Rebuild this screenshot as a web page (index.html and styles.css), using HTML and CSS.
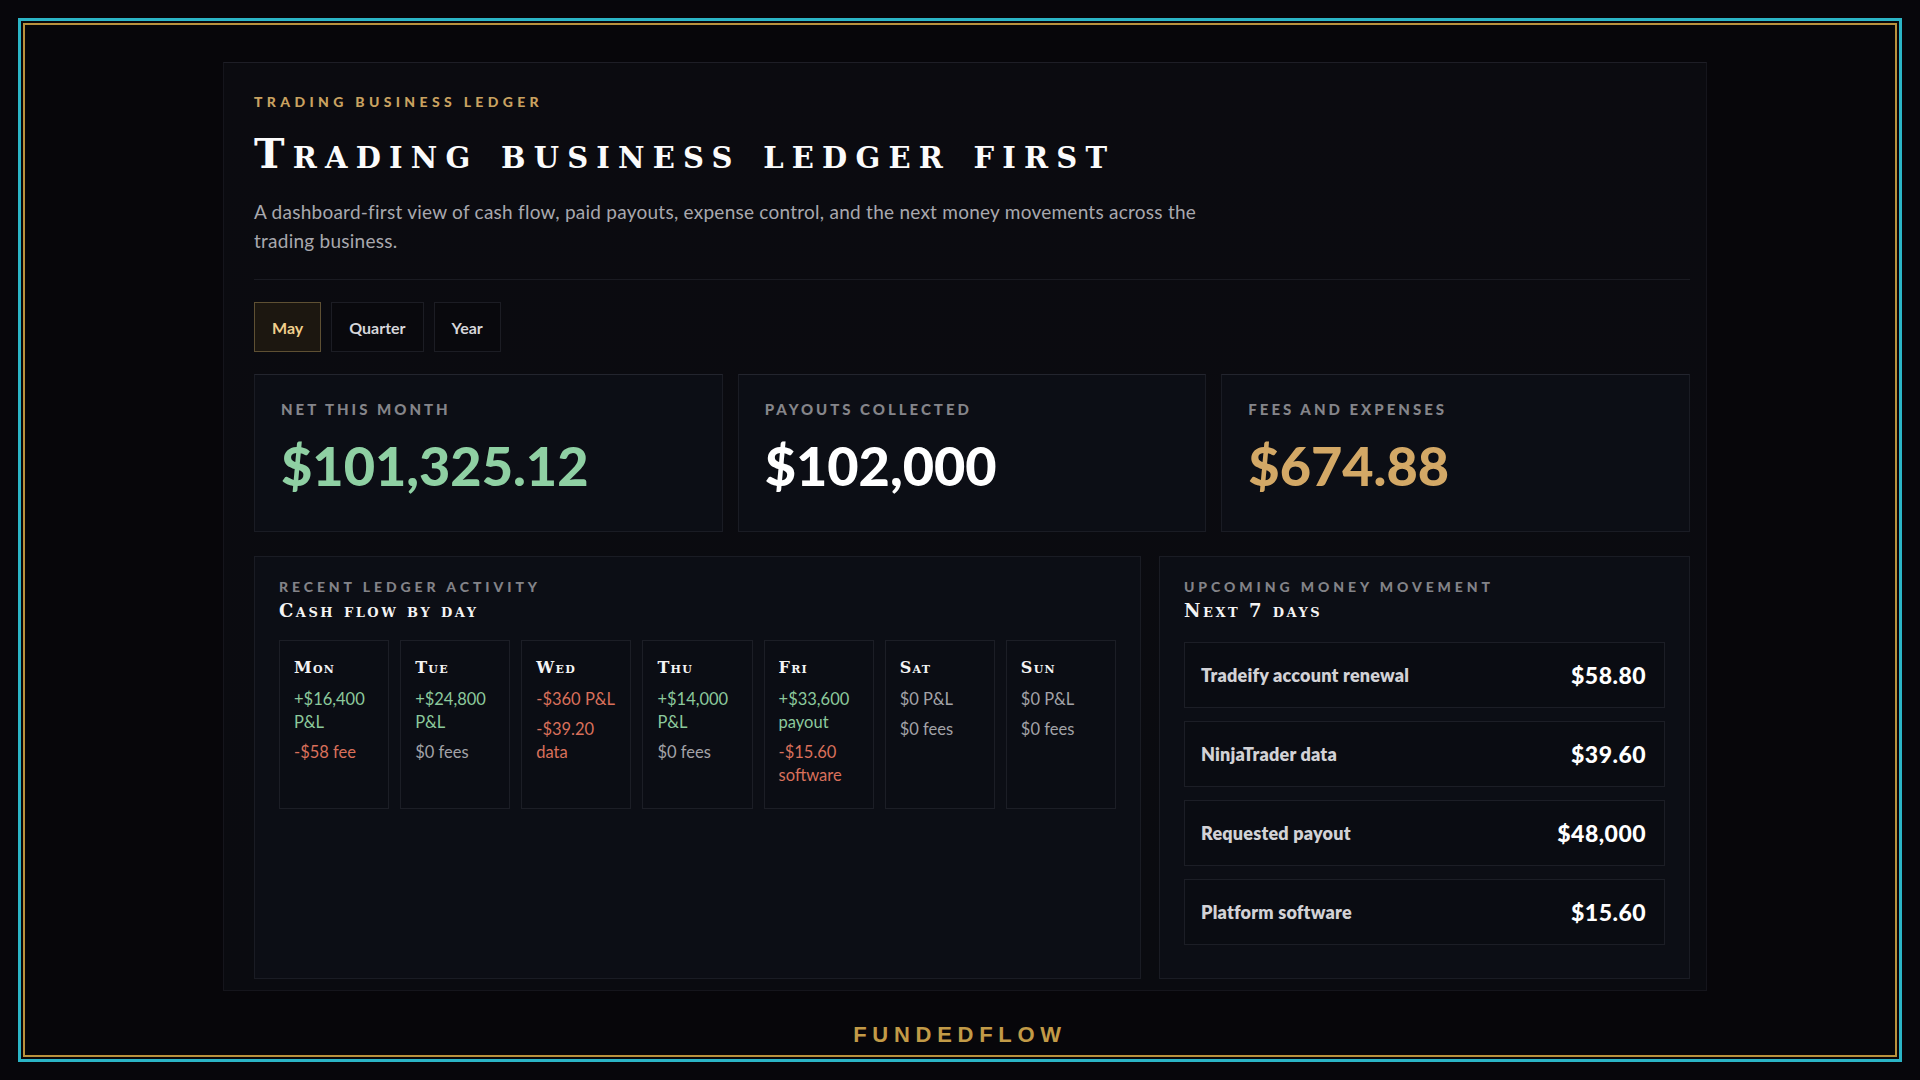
FILE: index.html
```html
<!DOCTYPE html>
<html lang="en">
<head>
    <meta charset="UTF-8">
    <meta name="viewport" content="width=device-width, initial-scale=1.0">
    <title>FundedFlow - Trading business ledger</title>
    <link rel="stylesheet" href="styles.css">
</head>
<body>
    <div class="frame">
        <div class="frame-inner">
            <main class="ledger">
                <header class="ledger-head">
                    <p class="eyebrow">Trading business ledger</p>
                    <h1>Trading business ledger first</h1>
                    <p class="lede">A dashboard-first view of cash flow, paid payouts, expense control, and the next money movements across the trading business.</p>
                </header>

                <div class="tabs">
                    <button class="tab active">May</button>
                    <button class="tab">Quarter</button>
                    <button class="tab">Year</button>
                </div>

                <section class="stats">
                    <div class="stat">
                        <div class="stat-label">Net this month</div>
                        <div class="stat-value green">$101,325.12</div>
                    </div>
                    <div class="stat">
                        <div class="stat-label">Payouts collected</div>
                        <div class="stat-value">$102,000</div>
                    </div>
                    <div class="stat">
                        <div class="stat-label">Fees and expenses</div>
                        <div class="stat-value gold">$674.88</div>
                    </div>
                </section>

                <section class="lower">
                    <div class="panel">
                        <div class="panel-label">Recent ledger activity</div>
                        <h2>Cash flow by day</h2>
                        <div class="days">
                            <div class="day">
                                <h3>Mon</h3>
                                <p class="pos">+$16,400 P&amp;L</p>
                                <p class="neg">-$58 fee</p>
                            </div>
                            <div class="day">
                                <h3>Tue</h3>
                                <p class="pos">+$24,800 P&amp;L</p>
                                <p>$0 fees</p>
                            </div>
                            <div class="day">
                                <h3>Wed</h3>
                                <p class="neg">-$360 P&amp;L</p>
                                <p class="neg">-$39.20 data</p>
                            </div>
                            <div class="day">
                                <h3>Thu</h3>
                                <p class="pos">+$14,000 P&amp;L</p>
                                <p>$0 fees</p>
                            </div>
                            <div class="day">
                                <h3>Fri</h3>
                                <p class="pos">+$33,600 payout</p>
                                <p class="neg">-$15.60 software</p>
                            </div>
                            <div class="day">
                                <h3>Sat</h3>
                                <p>$0 P&amp;L</p>
                                <p>$0 fees</p>
                            </div>
                            <div class="day">
                                <h3>Sun</h3>
                                <p>$0 P&amp;L</p>
                                <p>$0 fees</p>
                            </div>
                        </div>
                    </div>

                    <div class="panel">
                        <div class="panel-label">Upcoming money movement</div>
                        <h2>Next 7 days</h2>
                        <div class="moves">
                            <div class="move"><span>Tradeify account renewal</span><strong>$58.80</strong></div>
                            <div class="move"><span>NinjaTrader data</span><strong>$39.60</strong></div>
                            <div class="move"><span>Requested payout</span><strong>$48,000</strong></div>
                            <div class="move"><span>Platform software</span><strong>$15.60</strong></div>
                        </div>
                    </div>
                </section>
            </main>

            <footer class="brand">FUNDEDFLOW</footer>
        </div>
    </div>
</body>
</html>
```

FILE: styles.css
```css
* {
    box-sizing: border-box;
}
body {
    margin: 0;
    background-color: #07060b;
    font-family: Lato, "Open Sans", sans-serif;
    color: #d4d4d8;
}
.frame {
    margin: 18px;
    height: 1044px;
    border: 3px solid #2bb4c6;
    padding: 2px;
}
.frame-inner {
    height: 100%;
    border: 2px solid #b8913d;
    background-color: #07060a;
}
.ledger {
    margin: 37px 0 0 198px;
    width: 1484px;
    height: 929px;
    padding: 31px 16px 0 30px;
    background: linear-gradient(180deg, #0b0b10 0%, #0a0b10 100%);
    border: 1px solid #15151c;
    border-top-color: #1e1e26;
}
.ledger-head {
    border-bottom: 1px solid #1a1b22;
    padding-bottom: 24px;
}
.eyebrow {
    margin: 0;
    font-size: 14px;
    line-height: 16px;
    font-weight: 900;
    letter-spacing: 0.31em;
    text-transform: uppercase;
    color: #c9a260;
}
h1 {
    margin: 20px 0 0;
    font-family: "DejaVu Serif", serif;
    font-size: 41px;
    line-height: 48px;
    font-weight: 700;
    font-variant: small-caps;
    letter-spacing: 0.2em;
    color: #fbfbfb;
}
.lede {
    margin: 19px 0 0;
    max-width: 960px;
    font-size: 19px;
    line-height: 29px;
    letter-spacing: 0.25px;
    color: #a8a8ae;
}
.tabs {
    display: flex;
    gap: 10px;
    margin-top: 22px;
}
.tab {
    height: 50px;
    padding: 0 17px;
    font-family: Lato, sans-serif;
    font-size: 16px;
    font-weight: 700;
    color: #d6d6da;
    background-color: #09090d;
    border: 1px solid #1c1d24;
}
.tab.active {
    color: #f0cf8c;
    background-color: #1c1710;
    border-color: #5e5033;
}
.stats {
    display: grid;
    grid-template-columns: repeat(3, 1fr);
    gap: 15px;
    margin-top: 22px;
}
.stat {
    height: 158px;
    padding: 25px 26px 0;
    background-color: #0c0e15;
    border: 1px solid #1a1c24;
    border-top-color: #23252e;
}
.stat-label {
    font-size: 15px;
    line-height: 18px;
    font-weight: 900;
    letter-spacing: 0.2em;
    text-transform: uppercase;
    color: #85858a;
}
.stat-value {
    margin-top: 18px;
    font-size: 54px;
    line-height: 60px;
    font-weight: 900;
    color: #ffffff;
}
.stat-value.green {
    color: #8fd0a3;
}
.stat-value.gold {
    color: #d3a866;
}
.lower {
    display: grid;
    grid-template-columns: 887px 1fr;
    gap: 18px;
    margin-top: 24px;
}
.panel {
    height: 423px;
    padding: 22px 24px 0;
    background-color: #0c0e15;
    border: 1px solid #1a1c24;
}
.panel-label {
    font-size: 14px;
    line-height: 16px;
    font-weight: 900;
    letter-spacing: 0.28em;
    text-transform: uppercase;
    color: #838388;
}
h2 {
    margin: 6px 0 0;
    font-family: "DejaVu Serif", serif;
    font-size: 18px;
    line-height: 20px;
    font-weight: 700;
    font-variant: small-caps;
    letter-spacing: 0.14em;
    color: #f4f4f4;
}
.days {
    display: grid;
    grid-template-columns: repeat(7, 1fr);
    gap: 11px;
    margin-top: 19px;
}
.day {
    height: 169px;
    padding: 18px 14px 0;
    border: 1px solid #1c1e26;
    background-color: #0b0d14;
}
.day h3 {
    margin: 0 0 11px;
    font-family: "DejaVu Serif", serif;
    font-size: 16px;
    line-height: 18px;
    font-weight: 700;
    font-variant: small-caps;
    letter-spacing: 0.08em;
    color: #f4f4f4;
}
.day p {
    margin: 0 0 7px;
    font-size: 16.5px;
    line-height: 23px;
    color: #a3a3a8;
}
.day p.pos {
    color: #8cc99c;
}
.day p.neg {
    color: #d9705b;
}
.moves {
    display: flex;
    flex-direction: column;
    gap: 13px;
    margin-top: 21px;
}
.move {
    display: flex;
    justify-content: space-between;
    align-items: center;
    height: 66px;
    padding: 0 18px 0 16px;
    border: 1px solid #1c1e26;
    background-color: #0a0c12;
}
.move span {
    font-size: 18px;
    font-weight: 800;
    letter-spacing: 0.2px;
    color: #d2d2d6;
}
.move strong {
    font-size: 23px;
    font-weight: 900;
    letter-spacing: 0.02em;
    color: #ffffff;
}
.brand {
    margin-top: 33px;
    text-align: center;
    font-family: "Liberation Sans", Arial, sans-serif;
    font-size: 22px;
    line-height: 22px;
    font-weight: 700;
    letter-spacing: 0.26em;
    color: #c29a47;
}
```
